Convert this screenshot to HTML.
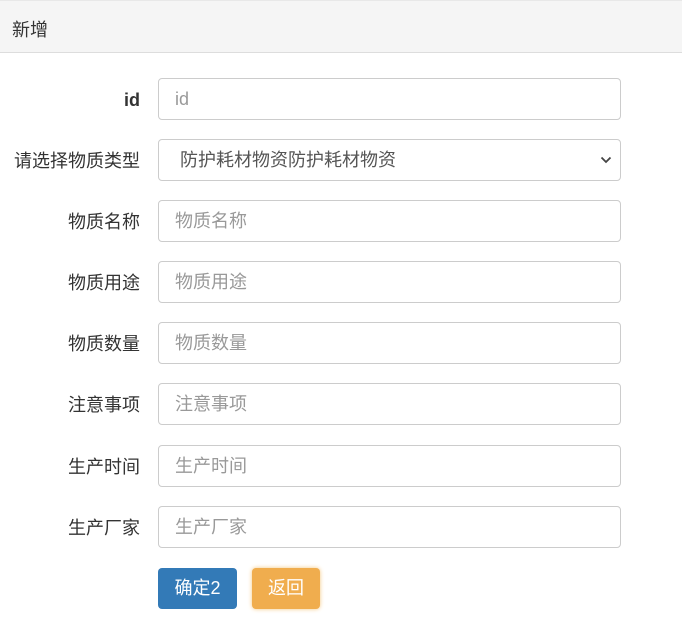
<!DOCTYPE html>
<html><head><meta charset="utf-8"><style>
body{margin:0;width:682px;height:626px;background:#fff;font-family:"Liberation Sans","Noto Sans CJK SC",sans-serif;overflow:hidden;position:relative}
.hd{position:absolute;left:0;top:0;width:682px;height:53px;background:#f5f5f5;border-bottom:1px solid #ddd;border-top:1px solid #e8e8e8;box-sizing:border-box}
.hd span{position:absolute;left:12px;top:15px;font-size:18px;color:#333}
.lb{position:absolute;right:542px;font-size:18px;color:#333;line-height:20px}
.in{position:absolute;left:158px;width:463px;height:42px;border:1px solid #ccc;border-radius:4px;box-sizing:border-box;font-size:18px;color:#999;padding-left:16px;line-height:41px}
.btn{position:absolute;top:568px;height:41px;border-radius:4px;color:#fff;font-size:18px;line-height:41px;text-align:center}
</style></head><body>
<div class="hd"><span>新增</span></div>
<div class="lb" style="top:90px;font-weight:bold">id</div><div class="in" style="top:78px">id</div>
<div class="lb" style="top:151px">请选择物质类型</div><div class="in" style="top:139px;color:#555;padding-left:21px">防护耗材物资防护耗材物资<svg style="position:absolute;right:8px;top:15px" width="12" height="10" viewBox="0 0 12 10"><path d="M1.5 2.5 6 7 10.5 2.5" fill="none" stroke="#444" stroke-width="1.8"/></svg></div>
<div class="lb" style="top:212px">物质名称</div><div class="in" style="top:200px">物质名称</div>
<div class="lb" style="top:273px">物质用途</div><div class="in" style="top:261px">物质用途</div>
<div class="lb" style="top:334px">物质数量</div><div class="in" style="top:322px">物质数量</div>
<div class="lb" style="top:395px">注意事项</div><div class="in" style="top:383px">注意事项</div>
<div class="lb" style="top:457px">生产时间</div><div class="in" style="top:445px">生产时间</div>
<div class="lb" style="top:518px">生产厂家</div><div class="in" style="top:506px">生产厂家</div>
<div class="btn" style="left:158px;width:79px;background:#337ab7">确定2</div>
<div class="btn" style="left:252px;width:68px;background:#f0ad4e;box-shadow:0 0 4px #f5c77e">返回</div>
</body></html>
